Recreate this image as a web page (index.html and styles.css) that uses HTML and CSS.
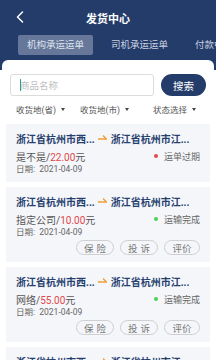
FILE: index.html
```html
<!DOCTYPE html>
<html lang="zh">
<head>
<meta charset="utf-8">
<title>发货中心</title>
<link rel="stylesheet" href="styles.css">
</head>
<body>
<div class="page">
  <header class="header">
    <div class="titlebar">
      <svg class="back" width="8" height="12" viewBox="0 0 8 12"><polyline points="6.5,1 1.5,6 6.5,11" fill="none" stroke="#fff" stroke-width="1.5" stroke-linecap="round" stroke-linejoin="round"/></svg>
      <div class="title">发货中心</div>
    </div>
    <nav class="tabs">
      <div class="tab active">机构承运运单</div>
      <div class="tab">司机承运运单</div>
      <div class="tab">付款中运单</div>
    </nav>
  </header>
  <main class="panel">
    <div class="search">
      <div class="input"><span class="caret"></span><span class="ph">商品名称</span></div>
      <div class="btn-search">搜索</div>
    </div>
    <div class="filters">
      <div class="filter">收货地(省)<span class="tri"></span></div>
      <div class="filter">收货地(市)<span class="tri"></span></div>
      <div class="filter">状态选择<span class="tri"></span></div>
    </div>
    <div class="list">
      <div class="card">
        <div class="route"><span>浙江省杭州市西...</span><svg class="arrow" width="9" height="6" viewBox="0 0 9 6"><path d="M0 5H8.5L5 1.5" fill="none" stroke="#f0a035" stroke-width="1.3"/></svg><span>浙江省杭州市江...</span></div>
        <div class="info"><div class="price">是不是/<em>22.00</em>元</div><div class="status"><i class="dot red"></i>运单过期</div></div>
        <div class="date">日期:&nbsp; 2021-04-09</div>
      </div>
      <div class="card">
        <div class="route"><span>浙江省杭州市西...</span><svg class="arrow" width="9" height="6" viewBox="0 0 9 6"><path d="M0 5H8.5L5 1.5" fill="none" stroke="#f0a035" stroke-width="1.3"/></svg><span>浙江省杭州市江...</span></div>
        <div class="info"><div class="price">指定公司/<em>10.00</em>元</div><div class="status"><i class="dot green"></i>运输完成</div></div>
        <div class="date">日期:&nbsp; 2021-04-09</div>
        <div class="actions"><div class="act spaced">保险</div><div class="act spaced">投诉</div><div class="act">评价</div></div>
      </div>
      <div class="card">
        <div class="route"><span>浙江省杭州市西...</span><svg class="arrow" width="9" height="6" viewBox="0 0 9 6"><path d="M0 5H8.5L5 1.5" fill="none" stroke="#f0a035" stroke-width="1.3"/></svg><span>浙江省杭州市江...</span></div>
        <div class="info"><div class="price">网络/<em>55.00</em>元</div><div class="status"><i class="dot green"></i>运输完成</div></div>
        <div class="date">日期:&nbsp; 2021-04-09</div>
        <div class="actions"><div class="act spaced">保险</div><div class="act spaced">投诉</div><div class="act">评价</div></div>
      </div>
      <div class="card">
        <div class="route"><span>浙江省杭州市西...</span><svg class="arrow" width="9" height="6" viewBox="0 0 9 6"><path d="M0 5H8.5L5 1.5" fill="none" stroke="#f0a035" stroke-width="1.3"/></svg><span>浙江省杭州市江...</span></div>
        <div class="info"><div class="price">网络/<em>55.00</em>元</div><div class="status"><i class="dot green"></i>运输完成</div></div>
        <div class="date">日期:&nbsp; 2021-04-09</div>
      </div>
    </div>
  </main>
</div>
</body>
</html>
```
FILE: styles.css
```css
* { box-sizing: border-box; }
html, body { margin: 0; padding: 0; }
body {
  width: 216px;
  height: 360px;
  overflow: hidden;
  background: #fff;
  font-family: Roboto, "Noto Sans CJK SC", sans-serif;
}
.page {
  background: linear-gradient(#243c6a 0 70px, #fff 70px);
  min-height: 360px;
}
.header {
  height: 60px;
  color: #fff;
}
.titlebar {
  height: 35px;
  display: flex;
  align-items: center;
  justify-content: center;
  position: relative;
}
.back {
  position: absolute;
  left: 16px;
  top: 11px;
}
.title {
  font-size: 11px;
  font-weight: 700;
  margin-top: 1px;
}
.tabs {
  display: flex;
  gap: 9px;
  padding-left: 18px;
  white-space: nowrap;
  overflow: hidden;
}
.tab {
  flex: none;
  height: 20px;
  line-height: 20px;
  padding: 0 9px;
  font-size: 9.5px;
  color: #c9d1e0;
  border-radius: 2px;
}
.tab.active {
  background: #66779a;
  color: #dfe4ee;
}
.panel {
  margin: 0 2px;
  background: #fff;
  border-radius: 6px 6px 0 0;
  padding-top: 14px;
  min-height: 300px;
}
.search {
  display: flex;
  gap: 7px;
  padding: 0 8px;
}
.input {
  width: 144px;
  height: 22px;
  border: 1px solid #dcdcdc;
  border-radius: 3px;
  display: flex;
  align-items: center;
  padding-left: 9px;
  position: relative;
}
.caret {
  position: absolute;
  left: 9px;
  top: 4px;
  width: 1px;
  height: 12px;
  background: #2aa198;
}
.ph {
  font-size: 9.5px;
  color: #c0c0c0;
}
.btn-search {
  width: 45px;
  height: 22px;
  border-radius: 11px;
  background: #243c6a;
  color: #fff;
  font-size: 10.5px;
  display: flex;
  align-items: center;
  justify-content: center;
}
.filters {
  display: grid;
  grid-template-columns: 64px 73px 1fr;
  padding-left: 14px;
  margin-top: 6px;
  height: 14px;
  align-items: center;
}
.filter {
  font-size: 8.5px;
  color: #555;
  display: flex;
  align-items: center;
  white-space: nowrap;
}
.tri {
  width: 0;
  height: 0;
  border-left: 2.5px solid transparent;
  border-right: 2.5px solid transparent;
  border-top: 3px solid #444;
  margin-left: 5px;
}
.list {
  margin: 8px 4px 0;
  display: flex;
  flex-direction: column;
  gap: 5px;
}
.card {
  background: #f5f6fa;
  padding: 7px 10px 7px;
}
.route {
  display: flex;
  align-items: center;
  height: 14px;
  font-size: 10px;
  font-weight: 700;
  color: #263f6e;
  white-space: nowrap;
}
.arrow {
  margin: 0 4px 2px 3px;
}
.info {
  margin-top: 4px;
  height: 14px;
  display: flex;
  justify-content: space-between;
  align-items: center;
}
.price {
  font-size: 10px;
  color: #555;
}
.price em {
  font-style: normal;
  color: #e0474c;
}
.status {
  display: flex;
  align-items: center;
  font-size: 9px;
  color: #666;
}
.dot {
  width: 4px;
  height: 4px;
  border-radius: 50%;
  margin-right: 6px;
}
.dot.red { background: #e5484d; }
.dot.green { background: #4fd053; }
.date {
  height: 12px;
  line-height: 12px;
  font-size: 8.5px;
  color: #666;
}
.actions {
  margin-top: 2px;
  display: flex;
  justify-content: flex-end;
  gap: 6px;
}
.act {
  width: 36px;
  height: 15px;
  border: 1px solid #cfcfcf;
  border-radius: 8px;
  font-size: 9.5px;
  color: #777;
  display: flex;
  align-items: center;
  justify-content: center;
}
.act.spaced {
  width: 38px;
  letter-spacing: 3px;
  padding-left: 3px;
}
```
